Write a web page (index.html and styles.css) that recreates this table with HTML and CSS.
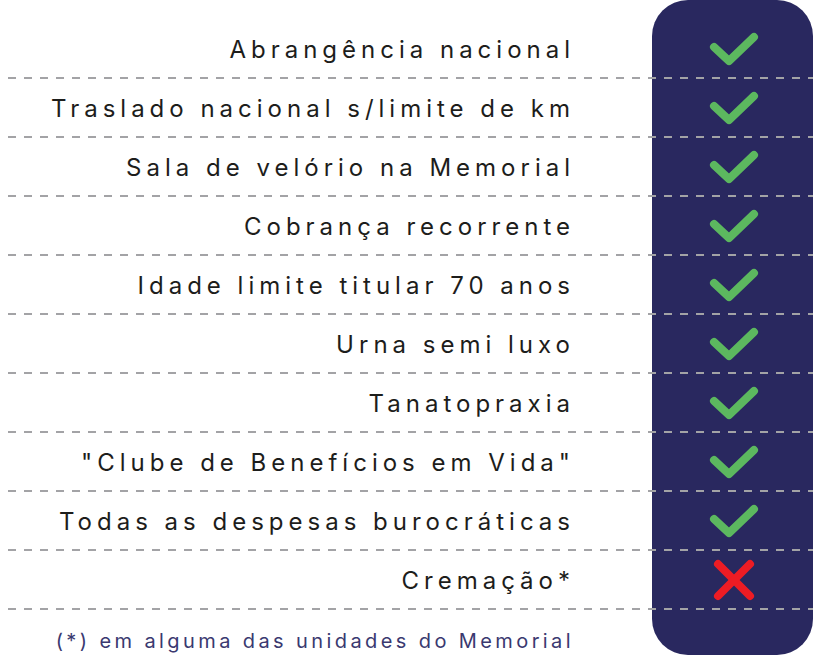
FILE: index.html
```html
<!doctype html>
<html lang="pt-BR">
  <head>
    <meta charset="UTF-8" />
    <meta name="viewport" content="width=device-width, initial-scale=1.0" />
    <title>Comparativo de planos</title>
    <link rel="stylesheet" href="styles.css">
  </head>
  <body>
    <div class="compare">
      <div class="compare-panel"></div>

      <div class="compare-list">
        <div class="compare-row">
          <span class="compare-label">Abrangência nacional</span>
          <span class="compare-mark">
            <svg class="icon-check" width="52" height="36" viewBox="0 0 52 36"><polyline points="6,16 21,30 46,6" /></svg>
          </span>
        </div>
        <div class="compare-row">
          <span class="compare-label">Traslado nacional s/limite de km</span>
          <span class="compare-mark">
            <svg class="icon-check" width="52" height="36" viewBox="0 0 52 36"><polyline points="6,16 21,30 46,6" /></svg>
          </span>
        </div>
        <div class="compare-row">
          <span class="compare-label">Sala de velório na Memorial</span>
          <span class="compare-mark">
            <svg class="icon-check" width="52" height="36" viewBox="0 0 52 36"><polyline points="6,16 21,30 46,6" /></svg>
          </span>
        </div>
        <div class="compare-row">
          <span class="compare-label">Cobrança recorrente</span>
          <span class="compare-mark">
            <svg class="icon-check" width="52" height="36" viewBox="0 0 52 36"><polyline points="6,16 21,30 46,6" /></svg>
          </span>
        </div>
        <div class="compare-row">
          <span class="compare-label">Idade limite titular 70 anos</span>
          <span class="compare-mark">
            <svg class="icon-check" width="52" height="36" viewBox="0 0 52 36"><polyline points="6,16 21,30 46,6" /></svg>
          </span>
        </div>
        <div class="compare-row">
          <span class="compare-label">Urna semi luxo</span>
          <span class="compare-mark">
            <svg class="icon-check" width="52" height="36" viewBox="0 0 52 36"><polyline points="6,16 21,30 46,6" /></svg>
          </span>
        </div>
        <div class="compare-row">
          <span class="compare-label">Tanatopraxia</span>
          <span class="compare-mark">
            <svg class="icon-check" width="52" height="36" viewBox="0 0 52 36"><polyline points="6,16 21,30 46,6" /></svg>
          </span>
        </div>
        <div class="compare-row">
          <span class="compare-label">"Clube de Benefícios em Vida"</span>
          <span class="compare-mark">
            <svg class="icon-check" width="52" height="36" viewBox="0 0 52 36"><polyline points="6,16 21,30 46,6" /></svg>
          </span>
        </div>
        <div class="compare-row">
          <span class="compare-label">Todas as despesas burocráticas</span>
          <span class="compare-mark">
            <svg class="icon-check" width="52" height="36" viewBox="0 0 52 36"><polyline points="6,16 21,30 46,6" /></svg>
          </span>
        </div>
        <div class="compare-row">
          <span class="compare-label">Cremação*</span>
          <span class="compare-mark">
            <svg class="icon-cross" width="42" height="42" viewBox="0 0 42 42"><line x1="5" y1="5" x2="37" y2="37" /><line x1="37" y1="5" x2="5" y2="37" /></svg>
          </span>
        </div>

        <p class="compare-note">(*) em alguma das unidades do Memorial</p>
      </div>
    </div>
  </body>
</html>
```

FILE: styles.css
```css
* {
  box-sizing: border-box;
  margin: 0;
  padding: 0;
}

body {
  background-color: #ffffff;
  font-family: Inter, "Open Sans", sans-serif;
  color: #1d1d1b;
}

.compare {
  display: grid;
  grid-template-columns: 652px 161px;
  width: 813px;
  height: 655px;
}

/* navy column behind the marks */
.compare-panel {
  grid-column: 2;
  grid-row: 1;
  background-color: #29285f;
  border-radius: 36px;
}

.compare-list {
  grid-column: 1 / -1;
  grid-row: 1;
  display: flex;
  flex-direction: column;
  padding-top: 20px;
}

.compare-row {
  display: flex;
  align-items: center;
  height: 59px;
  padding-bottom: 2px;
  background-image: linear-gradient(to right, #a3a3a6 8px, transparent 8px);
  background-size: 16px 2px;
  background-repeat: repeat-x;
  background-position: 8px 100%;
}

.compare-label {
  flex: 1;
  text-align: right;
  padding-top: 2px;
  padding-right: 77px;
  font-size: 24px;
  letter-spacing: 5px;
  line-height: 30px;
}

.compare-mark {
  width: 161px;
  display: flex;
  justify-content: center;
  padding-left: 3px;
}

.icon-check polyline {
  fill: none;
  stroke: #5cb85f;
  stroke-width: 8;
  stroke-linecap: round;
  stroke-linejoin: round;
}

.icon-cross line {
  stroke: #ed1c24;
  stroke-width: 8;
  stroke-linecap: round;
}

.compare-note {
  width: 652px;
  text-align: right;
  padding-top: 19px;
  padding-right: 78px;
  font-size: 20px;
  line-height: 24px;
  letter-spacing: 3.4px;
  color: #3a3970;
}
```
